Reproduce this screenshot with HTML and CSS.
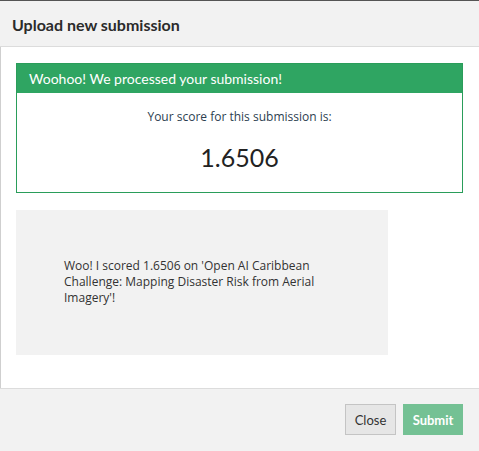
FILE: index.html
```html
<!DOCTYPE html>
<html>
<head>
<meta charset="utf-8">
<link rel="stylesheet" href="styles.css">
</head>
<body>
<div class="modal">
  <div class="modal-header">
    <h4 class="modal-title">Upload new submission</h4>
  </div>
  <div class="modal-body">
    <div class="result">
      <div class="result-head">Woohoo! We processed your submission!</div>
      <div class="result-body">
        <p class="score-label">Your score for this submission is:</p>
        <p class="score">1.6506</p>
      </div>
    </div>
    <div class="share">
      <p>Woo! I scored 1.6506 on 'Open AI Caribbean Challenge: Mapping Disaster Risk from Aerial Imagery'!</p>
    </div>
  </div>
  <div class="modal-footer">
    <button class="btn btn-close">Close</button>
    <button class="btn btn-submit">Submit</button>
  </div>
</div>
</body>
</html>
```
FILE: styles.css
```css
html, body {
  margin: 0;
  padding: 0;
  background: #f2f2f2;
}
body {
  font-family: "Open Sans", "Liberation Sans", sans-serif;
  color: #333;
}
.modal {
  border-top: 1px solid #555;
  display: flex;
  flex-direction: column;
  height: 450px;
}
.modal-header {
  background: #f2f2f2;
  border-bottom: 1px solid #dcdcdc;
  display: flex;
  align-items: center;
  padding-left: 12px;
  box-sizing: border-box;
  height: 46px;
}
.modal-title {
  margin: 0;
  font-family: Lato, "Open Sans", sans-serif;
  font-size: 16px;
  font-weight: 700;
  color: #2b2b2b;
  padding-top: 2px;
}
.modal-body {
  background: #fff;
  border-left: 1px solid #cfcfcf;
  padding: 16px 16px 33px 15px;
  height: 341px;
  box-sizing: border-box;
}
.result {
  border: 1px solid #2a9d5a;
}
.result-head {
  background: #2fa562;
  color: #fff;
  font-family: Lato, "Open Sans", sans-serif;
  font-size: 14px;
  height: 29px;
  line-height: 30px;
  padding-left: 12px;
}
.result-body {
  text-align: center;
  height: 99px;
  box-sizing: border-box;
  padding-top: 15px;
}
.score-label {
  margin: 0;
  font-size: 12px;
  line-height: 18px;
  color: #2c3e50;
}
.score {
  margin: 16px 0 0;
  font-family: Lato, "Open Sans", sans-serif;
  font-size: 25px;
  line-height: 30px;
  color: #222;
}
.share {
  margin-top: 17px;
  width: 372px;
  background: #f2f2f2;
  padding: 48px;
  box-sizing: border-box;
  height: 145px;
}
.share p {
  margin: 0;
  font-size: 12px;
  line-height: 16px;
  color: #333;
}
.modal-footer {
  flex: 1;
  border-top: 1px solid #dcdcdc;
  background: #f2f2f2;
  display: flex;
  justify-content: flex-end;
  align-items: flex-start;
  gap: 7px;
  padding: 15px 16px 0 0;
}
.btn {
  height: 31px;
  font-family: Lato, "Open Sans", sans-serif;
  font-size: 13px;
  padding: 0 8px;
  cursor: pointer;
}
.btn-close {
  background: #e6e6e6;
  border: 1px solid #c4c4c4;
  color: #333;
  width: 51px;
}
.btn-submit {
  background: #74c194;
  border: 1px solid #74c194;
  color: #fff;
  font-weight: 700;
  width: 60px;
}
```
